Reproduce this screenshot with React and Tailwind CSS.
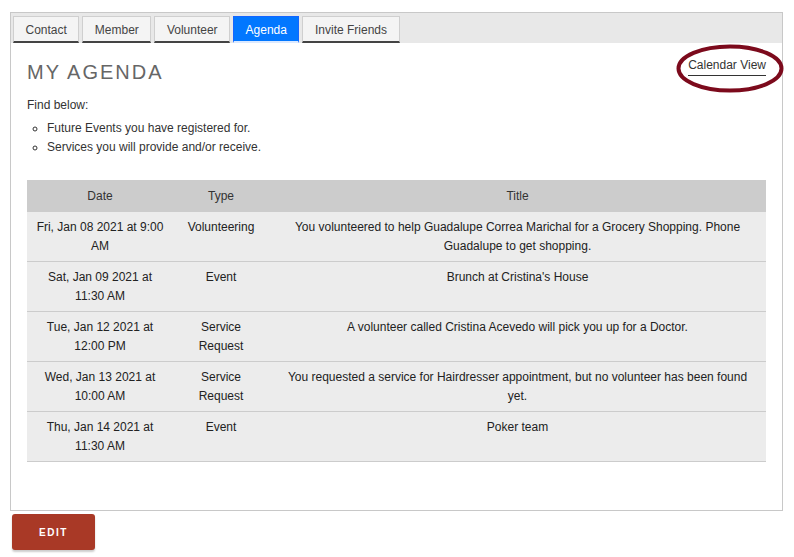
import React from 'react';

const tabs = ['Contact', 'Member', 'Volunteer', 'Agenda', 'Invite Friends'];

const rows = [
  { date: 'Fri, Jan 08 2021 at 9:00 AM', type: 'Volunteering', title: 'You volunteered to help Guadalupe Correa Marichal for a Grocery Shopping. Phone Guadalupe to get shopping.' },
  { date: 'Sat, Jan 09 2021 at 11:30 AM', type: 'Event', title: "Brunch at Cristina's House" },
  { date: 'Tue, Jan 12 2021 at 12:00 PM', type: 'Service Request', title: 'A volunteer called Cristina Acevedo will pick you up for a Doctor.' },
  { date: 'Wed, Jan 13 2021 at 10:00 AM', type: 'Service Request', title: 'You requested a service for Hairdresser appointment, but no volunteer has been found yet.' },
  { date: 'Thu, Jan 14 2021 at 11:30 AM', type: 'Event', title: 'Poker team' },
];

export default function App() {
  return (
    <div className="min-h-[557px] bg-white pl-[10px] pt-[12px] font-['Liberation_Sans',Arial,sans-serif] text-[12px] text-[#222]">
      {/* Panel */}
      <div className="relative w-[773px] h-[499px] border border-[#c8c8c8]">
        {/* Tab bar */}
        <div className="flex gap-[3px] bg-[#e8e8e8] pl-[2px] pt-[3px] h-[30px]">
          {tabs.map((t) => (
            <div
              key={t}
              className={
                t === 'Agenda'
                  ? 'h-[27px] px-[11.5px] pt-[2px] flex items-center border border-[#1565ff] border-b-2 border-b-[#dbe9ff] bg-[#0277ff] text-white'
                  : 'h-[27px] px-[11.5px] pt-[2px] flex items-center border border-[#cfcfcf] border-b-2 border-b-[#444] bg-[#f4f4f4] text-[#444]'
              }
            >
              {t}
            </div>
          ))}
        </div>

        <div className="px-4">
          {/* Heading row */}
          <div className="flex justify-between items-start mt-[12px]">
            <h1 className="mt-[5px] text-[20px] leading-[24px] tracking-[2px] text-[#666]">MY AGENDA</h1>
            <span className="relative mt-[3px] leading-[15px] pb-[2px] border-b border-[#333] text-[#333]">
              Calendar View
              <svg className="absolute -left-[12px] -top-[14px]" width="108" height="49" viewBox="0 0 108 49">
                <ellipse cx="54" cy="24.5" rx="51.5" ry="22" fill="none" stroke="#7c0a1c" strokeWidth="4" />
              </svg>
            </span>
          </div>

          <p className="mt-[12px] leading-[19px] text-[#333]">Find below:</p>
          <ul className="mt-[4px] pl-5 list-[circle] leading-[19px] text-[#333]">
            <li>Future Events you have registered for.</li>
            <li>Services you will provide and/or receive.</li>
          </ul>

          {/* Agenda table */}
          <div className="mt-[23px]">
            <div className="grid grid-cols-[146px_96px_1fr] h-[32px] items-center bg-[#cccccc] text-[#333] text-center">
              <div>Date</div>
              <div>Type</div>
              <div>Title</div>
            </div>
            {rows.map((r) => (
              <div
                key={r.date}
                className="grid grid-cols-[146px_96px_1fr] h-[50px] pt-[6px] bg-[#ececec] border-b border-[#cccccc] text-center leading-[19px]"
              >
                <div className="px-2">{r.date}</div>
                <div className="px-2">{r.type}</div>
                <div className="px-2">{r.title}</div>
              </div>
            ))}
          </div>
        </div>
      </div>

      <button className="mt-[3px] ml-[2px] w-[83px] h-[36px] rounded-[3px] bg-[#a93926] text-white text-[10px] font-bold tracking-[1.5px] shadow-[0_2px_2px_rgba(0,0,0,0.2)]">
        EDIT
      </button>
    </div>
  );
}
